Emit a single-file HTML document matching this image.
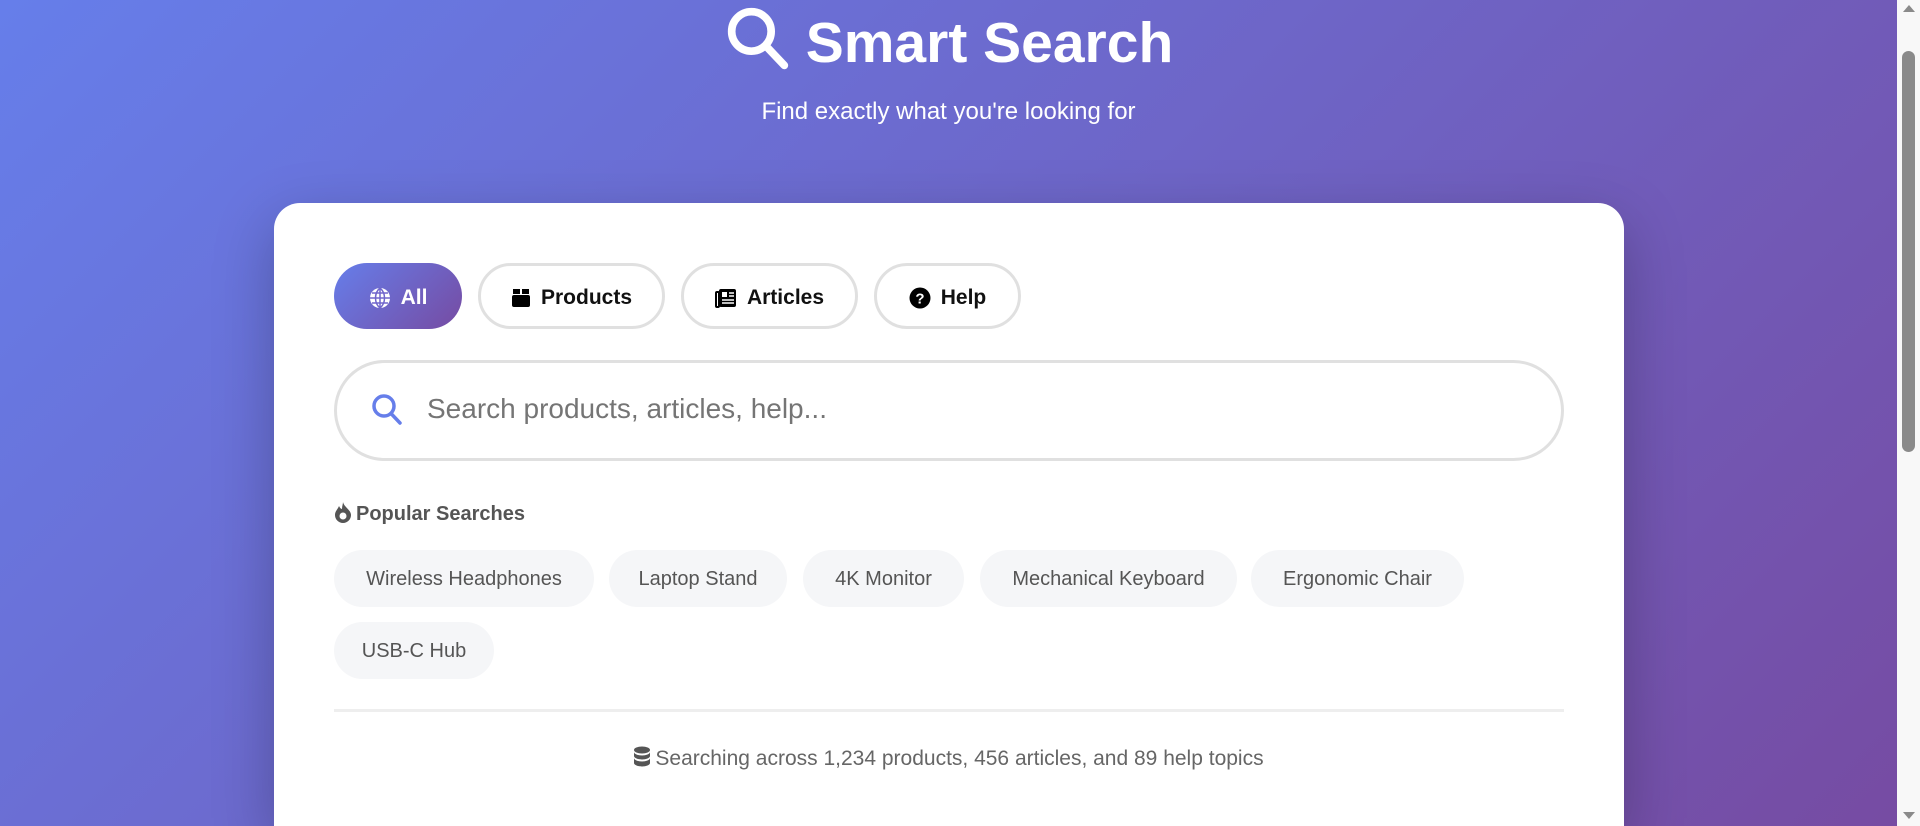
<!DOCTYPE html>
<html><head><meta charset="utf-8"><style>
*{margin:0;padding:0;box-sizing:border-box}
html,body{width:1920px;height:826px;overflow:hidden}
body{background:linear-gradient(135deg,#667eea 0%,#764ba2 100%);font-family:"Liberation Sans",sans-serif;position:relative}
.sb{position:absolute;right:0;top:0;width:23px;height:826px;background:#f8f8f8}
.thumb{position:absolute;left:5px;top:51px;width:13px;height:401px;background:#8a8a8a;border-radius:7px}
.title{position:absolute;left:0;width:1897px;top:4px;text-align:center;color:#fff;font-weight:bold;font-size:57px;line-height:60px}
.title svg{vertical-align:-10px;margin-right:14px}
.sub{position:absolute;left:0;width:1897px;top:98px;text-align:center;color:#fff;font-size:24px}
.card{position:absolute;left:274px;top:203px;width:1350px;height:623px;background:#fff;border-radius:26px 26px 0 0;box-shadow:0 20px 60px rgba(0,0,0,.25)}
.tab{position:absolute;top:263px;height:66px;border:3px solid #e0e0e0;border-radius:33px;background:#fff;font-weight:bold;font-size:21px;color:#111;display:flex;align-items:center;justify-content:center;gap:10px;padding-top:3px}
.tab.on{border:none;background:linear-gradient(135deg,#667eea,#764ba2);color:#fff}
.search{position:absolute;left:334px;top:360px;width:1230px;height:101px;border:3px solid #e0e0e0;border-radius:51px}
.ph{position:absolute;left:427px;top:393px;font-size:28px;color:#757575}
.pop{position:absolute;left:334px;top:501px;font-size:20px;font-weight:bold;color:#555}
.chip{position:absolute;height:57px;background:#f5f6f8;border-radius:29px;font-size:20px;color:#555;display:flex;align-items:center;justify-content:center;padding-top:2px}
.hr{position:absolute;left:334px;top:709px;width:1230px;height:3px;background:#eee}
.foot{position:absolute;left:0;width:1897px;top:746px;text-align:center;font-size:21px;color:#666}
</style></head><body>
<div class="title"><svg width="68" height="68" viewBox="0 0 62 62"><circle cx="25" cy="25" r="18" fill="none" stroke="#fff" stroke-width="7"/><line x1="38" y1="38" x2="55" y2="56" stroke="#fff" stroke-width="7" stroke-linecap="round"/></svg>Smart Search</div>
<div class="sub">Find exactly what you're looking for</div>
<div class="card"></div>
<div class="tab on" style="left:334px;width:128px"><svg width="22" height="22" viewBox="0 0 22 22"><circle cx="11" cy="11" r="10" fill="#fff"/><path d="M1 11h20M11 1v20M11 1c-6 5-6 15 0 20M11 1c6 5 6 15 0 20M3 6h16M3 16h16" stroke="#7066cc" stroke-width="1.5" fill="none"/></svg>All</div>
<div class="tab" style="left:478px;width:187px"><svg width="20" height="20" viewBox="0 0 20 20"><rect x="1" y="7" width="18" height="12" rx="2" fill="#000"/><rect x="2" y="1" width="7" height="5" fill="#000"/><rect x="11" y="1" width="7" height="5" fill="#000"/></svg>Products</div>
<div class="tab" style="left:681px;width:177px"><svg width="22" height="20" viewBox="0 0 22 20"><rect x="4" y="1" width="17" height="18" rx="2" fill="#000"/><rect x="1" y="4" width="3" height="15" rx="1" fill="none" stroke="#000" stroke-width="2"/><rect x="7" y="4" width="5" height="5" fill="#fff"/><path d="M14 5h5M14 8h5M7 12h12M7 15h12" stroke="#fff" stroke-width="1.6"/></svg>Articles</div>
<div class="tab" style="left:874px;width:147px"><svg width="22" height="22" viewBox="0 0 22 22"><circle cx="11" cy="11" r="10.5" fill="#000"/><text x="11" y="16.5" font-size="15" font-weight="bold" text-anchor="middle" fill="#fff" font-family="Liberation Sans">?</text></svg>Help</div>
<div class="search"></div>
<svg style="position:absolute;left:371px;top:393px" width="32" height="34" viewBox="0 0 32 34"><circle cx="13" cy="13" r="10" fill="none" stroke="#667eea" stroke-width="3.5"/><line x1="20.5" y1="21" x2="29" y2="30" stroke="#667eea" stroke-width="3.5" stroke-linecap="round"/></svg>
<div class="ph">Search products, articles, help...</div>
<div class="pop"><svg width="18" height="22" viewBox="0 0 18 22" style="vertical-align:-3px;margin-right:4px"><path d="M9 1C10 6 17 9 17 14a8 8 0 0 1-16 0c0-4 3-6 4-9 1 2 2 3 3 3 0-3 1-5 1-7z" fill="#555"/><circle cx="9" cy="15" r="3.5" fill="#fff"/></svg>Popular Searches</div>
<div class="chip" style="left:334px;top:550px;width:260px">Wireless Headphones</div>
<div class="chip" style="left:609px;top:550px;width:178px">Laptop Stand</div>
<div class="chip" style="left:803px;top:550px;width:161px">4K Monitor</div>
<div class="chip" style="left:980px;top:550px;width:257px">Mechanical Keyboard</div>
<div class="chip" style="left:1251px;top:550px;width:213px">Ergonomic Chair</div>
<div class="chip" style="left:334px;top:622px;width:160px">USB-C Hub</div>
<div class="hr"></div>
<div class="foot"><svg width="18" height="22" viewBox="0 0 18 22" style="vertical-align:-3px;margin-right:4px"><ellipse cx="9" cy="4" rx="8" ry="3.5" fill="#555"/><path d="M1 6v4c0 2 4 3.5 8 3.5s8-1.5 8-3.5V6c0 2-4 3.5-8 3.5S1 8 1 6zM1 12v5c0 2 4 3.5 8 3.5s8-1.5 8-3.5v-5c0 2-4 3.5-8 3.5S1 14 1 12z" fill="#555"/></svg>Searching across 1,234 products, 456 articles, and 89 help topics</div>
<div class="sb"><svg style="position:absolute;left:6px;top:5px" width="12" height="7"><path d="M0 7L6 0L12 7z" fill="#8a8a8a"/></svg><div class="thumb"></div><svg style="position:absolute;left:6px;top:812px" width="12" height="7"><path d="M0 0L6 7L12 0z" fill="#8a8a8a"/></svg></div>
</body></html>
